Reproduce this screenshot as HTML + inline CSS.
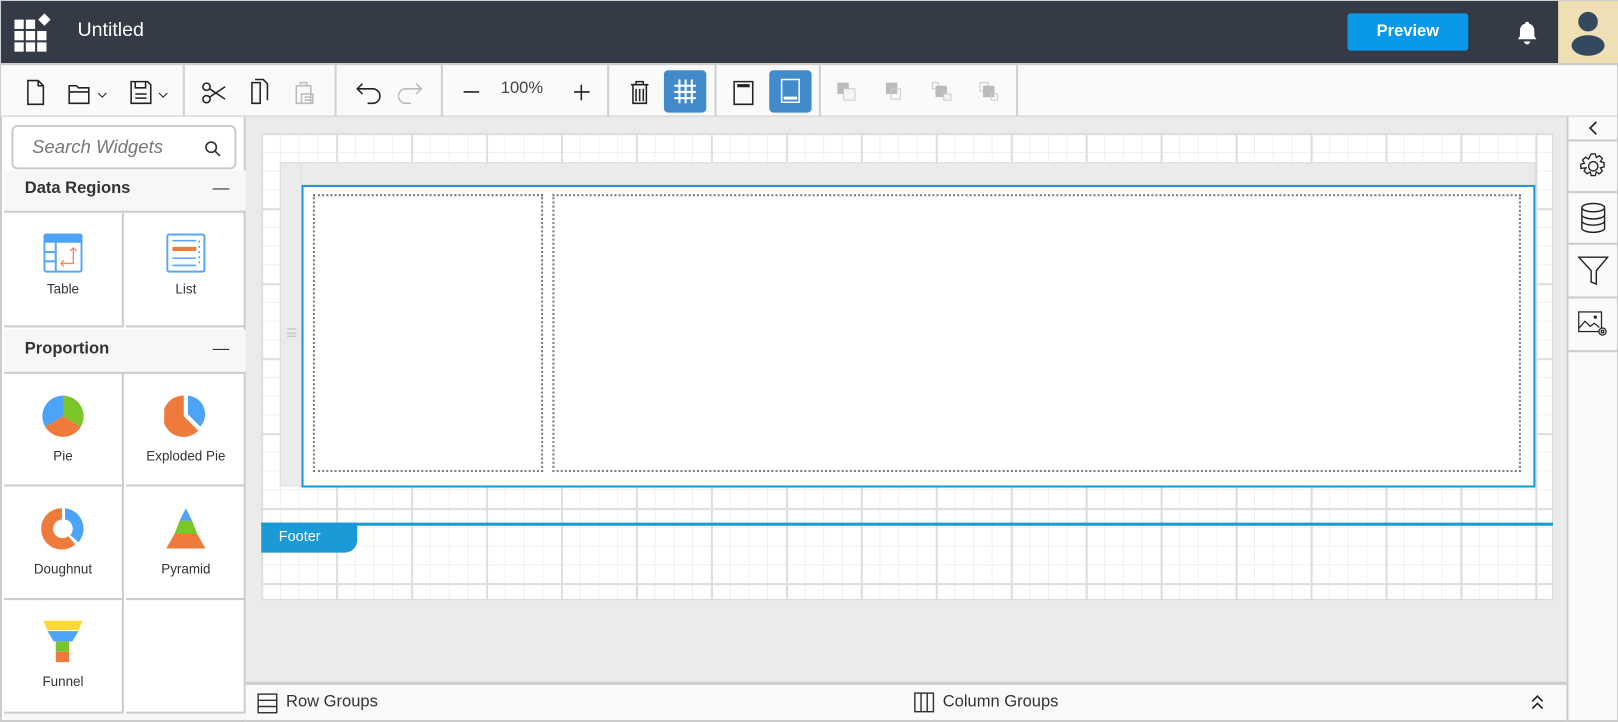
<!DOCTYPE html>
<html><head><meta charset="utf-8"><style>
*{box-sizing:border-box;margin:0;padding:0}
html,body{width:1618px;height:722px;overflow:hidden;background:#fff;font-family:"Liberation Sans",sans-serif;color:#333}
#w{position:absolute;left:0;top:0;width:1567px;height:699px;transform:scale(1.03255,1.03291);transform-origin:0 0;}
.a{position:absolute}
.top{left:0;top:0;width:1567px;height:61px;background:#343a46;border:1px solid #cfcfcf;border-bottom:none}
.tb{left:0;top:61px;width:1567px;height:52px;background:#fafafa;border:1px solid #ccc;border-top:2px solid #ccc}
.sep{position:absolute;top:0;width:2px;height:50px;background:#d0d0d0}
.lp{left:0;top:113px;width:238px;height:586px;background:#fff;border-left:2px solid #ccc;border-right:2px solid #ccc;border-bottom:2px solid #ccc}
.hd{position:absolute;left:2px;width:234px;background:#f7f7f7;font-size:16px;font-weight:bold;color:#333;padding-left:20px}
.hd span{position:absolute;right:16px;top:0;font-weight:normal}
.cell{position:absolute;width:116px;text-align:center;font-size:13px;color:#333;border-bottom:2px solid #ccc}
.cv{left:238px;top:113px;width:1279px;height:547px;background:#ebebeb}
.grid{left:253px;top:129px;width:1251px;height:452px;border:1px solid #d6d6d6;background-color:#fff;
background-image:linear-gradient(90deg,#dedede 2px,transparent 2px),linear-gradient(#dedede 2px,transparent 2px),linear-gradient(90deg,#f0f0f0 1px,transparent 1px),linear-gradient(#f0f0f0 1px,transparent 1px);
background-size:72.6px 72.6px,72.6px 72.6px,18.15px 18.15px,18.15px 18.15px;background-position:-1px -1px}
.rp{left:1517px;top:113px;width:50px;height:586px;background:#fafafa;border-left:2px solid #ccc;border-right:1px solid #ccc;border-bottom:2px solid #ccc}
.rb{position:absolute;left:0;width:48px;border-bottom:2px solid #ccc;display:flex;align-items:center;justify-content:center}
.bb{left:238px;top:660px;width:1279px;height:39px;background:#fafafa;border-top:3px solid #ccc;border-bottom:2px solid #ccc;font-size:16px;color:#333}
</style></head><body><div id="w">
<div class="a top">
 <svg class="a" style="left:12px;top:12px" width="38" height="38" viewBox="0 0 38 38" fill="#fff">
  <rect x="1" y="6" width="9" height="9"/><rect x="12" y="6" width="9" height="9"/>
  <rect x="1" y="17" width="9" height="9"/><rect x="12" y="17" width="9" height="9"/><rect x="23" y="17" width="9" height="9"/>
  <rect x="1" y="28" width="9" height="9"/><rect x="12" y="28" width="9" height="9"/><rect x="23" y="28" width="9" height="9"/>
  <path d="M30 0 L36 6 L30 12 L24 6Z"/></svg>
 <div class="a" style="left:74px;top:18px;font-size:19px;color:#fff">Untitled</div>
 <div class="a" style="left:1304px;top:12px;width:117px;height:36px;background:#0a98e8;border-radius:3px;color:#fff;font-weight:bold;font-size:16px;text-align:center;line-height:36px">Preview</div>
 <svg class="a" style="left:1467px;top:19px" width="22" height="24" viewBox="0 0 22 24" fill="#fff"><path d="M11 1a2 2 0 0 1 2 2c4 1 5 4 5 8v4l2 3H2l2-3v-4c0-4 1-7 5-8a2 2 0 0 1 2-2z"/><path d="M8 20h6a3 3 0 0 1-6 0z"/></svg>
 <div class="a" style="left:1508px;top:0;width:58px;height:60px;background:#efdfb5">
  <svg width="58" height="60" viewBox="0 0 58 60" fill="#34495e"><circle cx="29" cy="20" r="9.5"/><ellipse cx="29" cy="43" rx="16" ry="10"/></svg></div>
</div>
<div class="a tb">
 <svg class="a" style="left:0;top:0" width="1000" height="50" viewBox="0 0 1000 50" fill="none" stroke="#222" stroke-width="1.5">
  <path d="M26 15h10l5 5v18H26z M36 15v5h5"/>
  <path d="M66 20h7l2 2h10v15H66z M66 26h19"/><path d="M94 27l4 4 4-4" stroke-width="1"/>
  <path d="M126 16h16l3 3v18h-19z M130 16v6h10v-6 M130 28h11 M130 32h11" /><path d="M153 27l4 4 4-4" stroke-width="1"/>
  <circle cx="199" cy="21" r="3.5"/><circle cx="199" cy="33" r="3.5"/><path d="M202 23l15 10 M202 31l15-10"/>
  <path d="M243 17h8v20h-8z M246 14h8l4 4v16"/>
  <g stroke="#bbb"><path d="M286 20h14v17h-14z M290 20v-3h6v3 M291 28h11v9h-11z M294 31h6 M294 34h6"/></g>
  <path d="M346 23h14a7 7 0 0 1 0 14h-5 M350 18l-5 5 5 5"/>
  <g stroke="#bbb"><path d="M406 23h-14a7 7 0 0 0 0 14h5 M402 18l5 5-5 5"/></g>
  <path d="M448 26h15"/><path d="M555 26h15 M562 19v15"/>
  <path d="M610 19h17 M615 19v-3h7v3 M612 19v18h13v-18 M615 23v12 M618.5 23v12 M622 23v12"/>
  <path d="M710 16h18v22h-18z"/><path d="M713 20h12" stroke-width="3"/>
 </svg>
 <div class="a" style="left:484px;top:14px;font-size:16px;color:#444">100%</div>
 <div class="a" style="left:642px;top:5px;width:41px;height:41px;background:#428bca;border-radius:4px">
  <svg width="41" height="41" viewBox="0 0 41 41" stroke="#fff" stroke-width="2"><path d="M10 15h21 M10 21h21 M10 27h21 M15 9v23 M21 9v23 M27 9v23"/></svg></div>
 <div class="a" style="left:744px;top:5px;width:41px;height:41px;background:#428bca;border-radius:4px">
  <svg width="41" height="41" viewBox="0 0 41 41" fill="none" stroke="#fff" stroke-width="1.5"><path d="M12 9h17v22H12z"/><path d="M14 27h13" stroke-width="3"/></svg></div>
 <svg class="a" style="left:805px;top:14px" width="170" height="24" viewBox="0 0 170 24">
  <rect x="5" y="3" width="11" height="11" fill="#bbb"/><rect x="11" y="9" width="11" height="11" fill="#f4f4f4" stroke="#ccc"/>
  <rect x="52" y="3" width="11" height="11" fill="#bbb"/><rect x="57" y="9" width="9" height="10" fill="none" stroke="#ccc"/>
  <rect x="97" y="3" width="6" height="6" fill="none" stroke="#ccc"/><rect x="100" y="6" width="11" height="11" fill="#bbb"/><rect x="108" y="14" width="7" height="6" fill="#f4f4f4" stroke="#ccc"/>
  <rect x="143" y="3" width="8" height="8" fill="none" stroke="#ccc"/><rect x="146" y="6" width="11" height="11" fill="#bbb"/><rect x="154" y="14" width="6" height="6" fill="none" stroke="#ccc"/>
 </svg>
 <div class="sep" style="left:176px"></div><div class="sep" style="left:323px"></div><div class="sep" style="left:426px"></div>
 <div class="sep" style="left:587px"></div><div class="sep" style="left:691px"></div><div class="sep" style="left:792px"></div><div class="sep" style="left:983px"></div>
</div>
<div class="a lp">
 <div class="a" style="left:9px;top:8px;width:218px;height:43px;border:2px solid #ccc;border-radius:6px;background:#fff">
  <div class="a" style="left:18px;top:9px;font-size:18px;font-style:italic;color:#777">Search Widgets</div>
  <svg class="a" style="left:185px;top:13px" width="16" height="16" fill="none" stroke="#333" stroke-width="1.6"><circle cx="6.5" cy="6.5" r="5"/><path d="M10 10l5 5"/></svg></div>
 <div class="hd" style="top:52px;height:40px;line-height:36px">Data Regions<span>—</span></div>
 <div class="a" style="left:2px;top:91px;width:234px;height:2px;background:#ccc"></div>
 <div class="cell" style="left:2px;top:93px;height:111px;border-right:2px solid #ccc">
  <svg style="margin-top:20px" width="38" height="38" viewBox="0 0 38 38"><rect x="1" y="1" width="36" height="36" rx="2" fill="#fff" stroke="#5aa8f5" stroke-width="2"/><rect x="1" y="1" width="36" height="8" fill="#4da3f7"/><path d="M1 18h11M1 27h11M12 9v28" stroke="#5aa8f5" stroke-width="2"/><path d="M29 14v15H17 M26 17l3-3 3 3 M20 26l-3 3 3 3" stroke="#f08a6c" stroke-width="1.3" fill="none"/></svg>
  <div style="margin-top:5px">Table</div></div>
 <div class="cell" style="left:120px;top:93px;height:111px">
  <svg style="margin-top:20px" width="38" height="38" viewBox="0 0 38 38"><rect x="1" y="1" width="36" height="36" rx="2" fill="#fff" stroke="#5aa8f5" stroke-width="2"/><path d="M6 7h23M6 24h23M6 31h23" stroke="#5aa8f5" stroke-width="1.5"/><path d="M6 15h23" stroke="#ee7b3c" stroke-width="4"/><path d="M32 7v24" stroke="#5aa8f5" stroke-width="1.5" stroke-dasharray="2 3"/></svg>
  <div style="margin-top:5px">List</div></div>
 <div class="hd" style="top:206px;height:42px;line-height:38px">Proportion<span>—</span></div>
 <div class="a" style="left:2px;top:247px;width:234px;height:2px;background:#ccc"></div>
 <div class="cell" style="left:2px;top:249px;height:109px;border-right:2px solid #ccc">
  <svg style="margin-top:20px" width="42" height="42" viewBox="-21 -21 42 42"><path d="M0 0V-20A20 20 0 0 1 17.3 10Z" fill="#7ac62a"/><path d="M0 0L17.3 10A20 20 0 0 1-17.3 10Z" fill="#ee7b3c"/><path d="M0 0L-17.3 10A20 20 0 0 1 0-20Z" fill="#4da3f7"/></svg>
  <div style="margin-top:7px">Pie</div></div>
 <div class="cell" style="left:120px;top:249px;height:109px">
  <svg style="margin-top:20px" width="42" height="42" viewBox="-21 -21 42 42"><path d="M2-2V-20A18 18 0 0 1 14 10Z" fill="#4da3f7"/><path d="M-2 0V-20A20 20 0 1 0 12 14Z" fill="#ee7b3c"/></svg>
  <div style="margin-top:7px">Exploded Pie</div></div>
 <div class="cell" style="left:2px;top:358px;height:110px;border-right:2px solid #ccc">
  <svg style="margin-top:20px" width="42" height="42" viewBox="-21 -21 42 42"><path d="M2-20A20 20 0 0 1 15 13L7 6A9 9 0 0 0 2-9Z" fill="#4da3f7"/><path d="M-1-20V-9A9 9 0 1 0 5 7L12 15A20 20 0 1 1-1-20Z" fill="#ee7b3c"/></svg>
  <div style="margin-top:7px">Doughnut</div></div>
 <div class="cell" style="left:120px;top:358px;height:110px">
  <svg style="margin-top:20px" width="42" height="42" viewBox="0 0 42 42"><path d="M21 1L27 13H15Z" fill="#4da3f7"/><path d="M15 13H27L32 26H10Z" fill="#7ac62a"/><path d="M10 26H32L40 40H2Z" fill="#ee7b3c"/></svg>
  <div style="margin-top:7px">Pyramid</div></div>
 <div class="cell" style="left:2px;top:468px;height:110px;border-right:2px solid #ccc">
  <svg style="margin-top:19px" width="40" height="42" viewBox="0 0 40 42"><path d="M1 1H39L35 10H5Z" fill="#fcd835"/><path d="M5 11H35L29 21H11Z" fill="#4da3f7"/><rect x="13" y="21" width="13" height="10" fill="#7ac62a"/><rect x="13" y="31" width="13" height="10" fill="#ee7b3c"/></svg>
  <div style="margin-top:7px">Funnel</div></div>
 <div class="cell" style="left:120px;top:468px;height:110px"></div>
 <div class="a" style="left:2px;top:578px;width:234px;height:6px;background:#f7f7f7"></div>
</div>
<div class="a cv"></div>
<div class="a grid"></div>
<div class="a" style="left:271px;top:157px;width:1216px;height:314px;background:#ebebeb;border:1px solid #ddd"></div>
<div class="a" style="left:291px;top:157px;width:1px;height:22px;background:#ddd"></div>
<div class="a" style="left:278px;top:318px;width:9px;height:8px;border-top:1px solid #bbb;border-bottom:1px solid #bbb"><div style="margin-top:3px;height:1px;background:#bbb"></div></div>
<div class="a" style="left:292px;top:179px;width:1195px;height:293px;background:#fff;border:2px solid #1a9ad6"></div>
<div class="a" style="left:303px;top:188px;width:223px;height:269px;border:2px dotted #7d7d7d"></div>
<div class="a" style="left:535px;top:188px;width:938px;height:269px;border:2px dotted #7d7d7d"></div>
<div class="a" style="left:253px;top:506px;width:1251px;height:3px;background:#1a9ad6"></div>
<div class="a" style="left:253px;top:506px;width:93px;height:29px;background:#1a9ad6;border-bottom-right-radius:12px;color:#fff;font-size:14px;padding:5px 0 0 17px">Footer</div>
<div class="a bb">
 <svg class="a" style="left:11px;top:8px" width="20" height="20" fill="none" stroke="#333" stroke-width="1.4"><rect x="1" y="1" width="18" height="18"/><path d="M1 7h18M1 13h18"/></svg>
 <div class="a" style="left:39px;top:8px">Row Groups</div>
 <svg class="a" style="left:647px;top:7px" width="20" height="20" fill="none" stroke="#333" stroke-width="1.4"><rect x="1" y="1" width="18" height="18"/><path d="M7 1v18M13 1v18"/></svg>
 <div class="a" style="left:675px;top:8px">Column Groups</div>
 <svg class="a" style="left:1244px;top:9px" width="14" height="16" fill="none" stroke="#222" stroke-width="1.6"><path d="M2 7l5-5 5 5M2 14l5-5 5 5"/></svg>
</div>
<div class="a rp">
 <div class="rb" style="top:0;height:24px"><svg width="10" height="14" fill="none" stroke="#222" stroke-width="1.6"><path d="M8 1L2 7l6 6"/></svg></div>
 <div class="rb" style="top:24px;height:50px"><svg width="28" height="28" viewBox="0 0 28 28" fill="none" stroke="#222" stroke-width="1.3"><path d="M12 2h4l1 3.5 3-1.8 2.8 2.8-1.8 3 3.5 1v4l-3.5 1 1.8 3-2.8 2.8-3-1.8-1 3.5h-4l-1-3.5-3 1.8-2.8-2.8 1.8-3L2 16v-4l3.5-1-1.8-3 2.8-2.8 3 1.8z"/><circle cx="14" cy="14" r="4.5"/></svg></div>
 <div class="rb" style="top:74px;height:50px"><svg width="26" height="30" viewBox="0 0 26 30" fill="none" stroke="#222" stroke-width="1.4"><ellipse cx="13" cy="5" rx="11" ry="4"/><path d="M2 5v20c0 2 5 4 11 4s11-2 11-4V5 M2 12c0 2 5 4 11 4s11-2 11-4 M2 18c0 2 5 4 11 4s11-2 11-4"/></svg></div>
 <div class="rb" style="top:124px;height:52px"><svg width="30" height="30" viewBox="0 0 30 30" fill="none" stroke="#222" stroke-width="1.4"><path d="M1 2h28L18 15v13l-5-2V15z"/></svg></div>
 <div class="rb" style="top:176px;height:52px"><svg width="30" height="26" viewBox="0 0 30 26" fill="none" stroke="#222" stroke-width="1.2"><rect x="1" y="1" width="22" height="19"/><path d="M1 17l6-7 5 5 4-3 5 4"/><circle cx="17" cy="6" r="1" fill="#222"/><circle cx="24" cy="20" r="3.5" fill="#fafafa"/><circle cx="24" cy="20" r="1.3"/></svg></div>
</div>
</div></body></html>
